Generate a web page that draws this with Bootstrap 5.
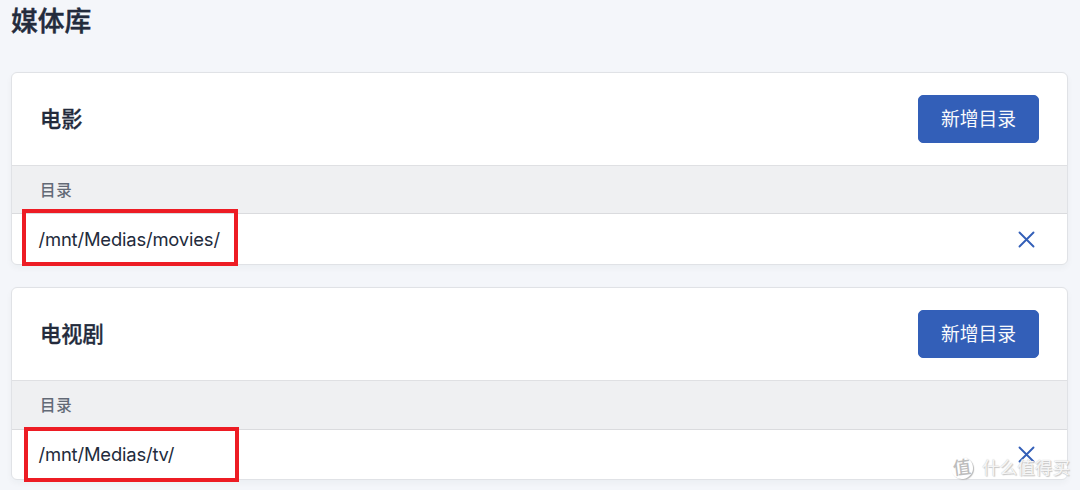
<!DOCTYPE html>
<html lang="zh-CN">
<head>
<meta charset="utf-8">
<meta name="viewport" content="width=device-width, initial-scale=1">
<title>媒体库</title>
<link href="https://cdn.jsdelivr.net/npm/bootstrap@5.3.0/dist/css/bootstrap.min.css" rel="stylesheet">
<style>
body{background:#f4f6fa;color:#232b3c;font-family:Inter,"Noto Sans CJK SC",sans-serif;height:490px;overflow:hidden}
.page{padding:0 12px 0 11px}
.page-title{font-size:26.8px;line-height:40px;font-weight:500;height:72px;padding-top:1px;-webkit-text-stroke:.45px currentColor}
.library{border:1px solid #e0e2e6;border-radius:6px;box-shadow:0 3px 6px rgba(35,46,60,.04);height:193px}
.library + .library{margin-top:22px}
.library-head{height:92px;padding:0 28px 0 28px}
.library-head h2{font-size:21.2px;line-height:30px;font-weight:500;padding-bottom:1px;-webkit-text-stroke:.3px currentColor}
.btn-add{--bs-btn-color:#f8fafc;--bs-btn-bg:#335fb8;--bs-btn-border-color:#335fb8;--bs-btn-hover-color:#fff;--bs-btn-hover-bg:#2b529f;width:121px;height:48px;padding:2px 0 0;font-size:18.8px;border-radius:5px}
.col-label{height:49px;background:#eff0f2;border-top:1px solid #dfe0e3;border-bottom:1px solid #dadbde;color:#626976;font-size:15.5px;font-weight:500;letter-spacing:.7px;padding:2px 28px 0}
.library + .library .col-label{height:50px;padding-top:1px}
.path-row{padding:0 32.5px 0 26.5px;font-size:18.4px;letter-spacing:-.17px}
.path-row span{padding-top:1px}
.remove{color:#335fb8;line-height:0}
.outline{border:4px solid #ed1c24;pointer-events:none}
.outline-movies{left:10px;top:136px;width:216px;height:57px}
.outline-tv{left:12px;top:139px;width:215px;height:55px}
.watermark{left:951px;top:455px;color:rgba(255,255,255,.85);font-size:17.6px;line-height:26px;text-shadow:0 0 1px #bbb,1px 1px 1px #c8c8c8}
.watermark-logo{width:22px;height:22px;border-radius:50%;background:#fff;color:#bdbdbd;font-size:18px;font-weight:500;line-height:21px;box-shadow:1px 1px 1px #bbb;text-shadow:none;margin-right:9px;transform:rotate(-7deg)}
</style>
</head>
<body>
<main class="page">
  <h1 class="page-title mb-0">媒体库</h1>
  <section class="card library">
    <div class="library-head d-flex align-items-center justify-content-between flex-shrink-0">
      <h2 class="mb-0">电影</h2>
      <button type="button" class="btn btn-add">新增目录</button>
    </div>
    <div class="col-label d-flex align-items-center flex-shrink-0">目录</div>
    <div class="path-row d-flex align-items-center justify-content-between flex-grow-1">
      <span>/mnt/Medias/movies/</span>
      <a href="#" class="remove" aria-label="删除"><svg width="17" height="17" viewBox="0 0 17 17" fill="none" stroke="currentColor" stroke-width="1.9" stroke-linecap="round"><path d="M1.5 1.5l14 14M15.5 1.5l-14 14"/></svg></a>
    </div>
    <div class="outline outline-movies position-absolute"></div>
  </section>
  <section class="card library">
    <div class="library-head d-flex align-items-center justify-content-between flex-shrink-0">
      <h2 class="mb-0">电视剧</h2>
      <button type="button" class="btn btn-add">新增目录</button>
    </div>
    <div class="col-label d-flex align-items-center flex-shrink-0">目录</div>
    <div class="path-row d-flex align-items-center justify-content-between flex-grow-1">
      <span>/mnt/Medias/tv/</span>
      <a href="#" class="remove" aria-label="删除"><svg width="17" height="17" viewBox="0 0 17 17" fill="none" stroke="currentColor" stroke-width="1.9" stroke-linecap="round"><path d="M1.5 1.5l14 14M15.5 1.5l-14 14"/></svg></a>
    </div>
    <div class="outline outline-tv position-absolute"></div>
  </section>
</main>
<div class="watermark position-absolute d-flex align-items-center text-nowrap"><span class="watermark-logo text-center flex-shrink-0">值</span>什么值得买</div>
<script src="https://cdn.jsdelivr.net/npm/bootstrap@5.3.0/dist/js/bootstrap.bundle.min.js"></script>
</body>
</html>
